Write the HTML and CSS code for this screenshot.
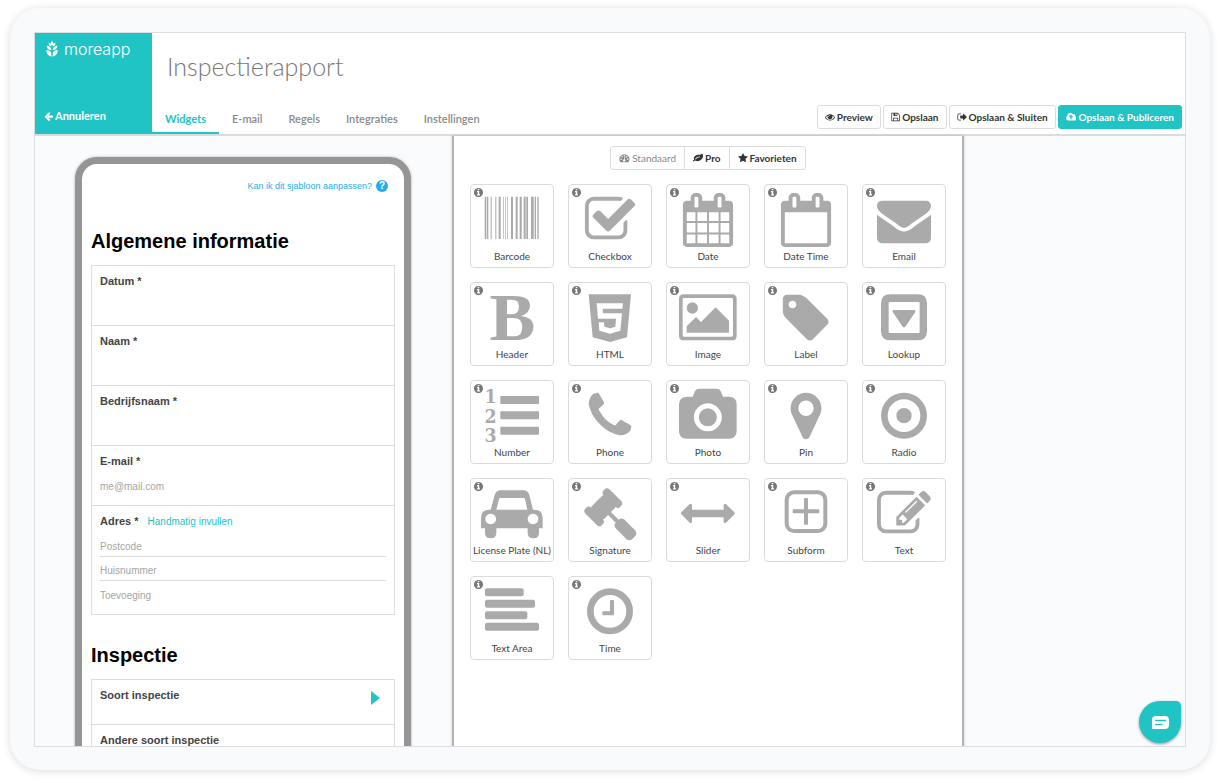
FILE: index.html
```html
<!DOCTYPE html>
<html lang="nl">
<head>
<meta charset="utf-8">
<meta name="viewport" content="width=device-width, initial-scale=1">
<title>Inspectierapport - MoreApp</title>
<link rel="stylesheet" href="styles.css">
</head>
<body>
<svg class="sprite" aria-hidden="true">
  <symbol id="info" viewBox="128 128 1536 1536"><path d="M1152 1376v-160q0-14-9-23t-23-9h-96v-512q0-14-9-23t-23-9h-320q-14 0-23 9t-9 23v160q0 14 9 23t23 9h96v320h-96q-14 0-23 9t-9 23v160q0 14 9 23t23 9h448q14 0 23-9t9-23zm-128-896v-160q0-14-9-23t-23-9h-192q-14 0-23 9t-9 23v160q0 14 9 23t23 9h192q14 0 23-9t9-23zm640 416q0 209-103 385.5t-279.5 279.5-385.5 103-385.5-103-279.5-279.5-103-385.5 103-385.5 279.5-279.5 385.5-103 385.5 103 279.5 279.5 103 385.5z"/></symbol>
</svg>
<div class="card">
<div class="app">
  <header class="header">
    <div class="brand">
      <a class="logo" href="#">
        <svg class="logo-mark" viewBox="0 0 36 48" aria-hidden="true">
          <path d="M18 0c5 4 5 9 0 13-5-4-5-9 0-13zM8 5c6 1 9 5 8 11-6-1-9-5-8-11zM28 5c-6 1-9 5-8 11 6-1 9-5 8-11zM2 14c8 0 14 5 14 13C8 27 2 22 2 14zM34 14c-8 0-14 5-14 13 8 0 14-5 14-13zM1 27c9 0 15 5 15 12v8C7 45 1 38 1 27zM35 27c-9 0-15 5-15 12v8c9-2 15-9 15-20z"/>
        </svg>
        <span>moreapp</span>
      </a>
      <a class="cancel" href="#">
        <svg viewBox="64 128 1600 1600" aria-hidden="true"><path d="M1664 896v128q0 53-32.5 90.5t-84.5 37.5h-704l293 294q38 36 38 90t-38 90l-75 76q-37 37-90 37-52 0-91-37l-651-652q-37-37-37-90 0-52 37-91l651-650q38-38 91-38 52 0 90 38l75 74q38 38 38 91t-38 91l-293 293h704q52 0 84.5 37.5t32.5 90.5z"/></svg>
        Annuleren
      </a>
    </div>
    <div class="head-main">
      <h1>Inspectierapport</h1>
      <div class="head-row">
        <nav class="tabs">
          <a class="tab active" href="#">Widgets</a>
          <a class="tab" href="#">E-mail</a>
          <a class="tab" href="#">Regels</a>
          <a class="tab" href="#">Integraties</a>
          <a class="tab" href="#">Instellingen</a>
        </nav>
        <div class="actions">
          <button class="btn" type="button"><svg viewBox="0 0 1792 1792" aria-hidden="true"><path d="M1664 960q-152-236-381-353 61 104 61 225 0 185-131.5 316.5t-316.5 131.5-316.5-131.5-131.5-316.5q0-121 61-225-229 117-381 353 133 205 333.5 326.5t434.5 121.5 434.5-121.5 333.5-326.5zm-720-384q0-20-14-34t-34-14q-125 0-214.5 89.5t-89.5 214.5q0 20 14 34t34 14 34-14 14-34q0-86 61-147t147-61q20 0 34-14t14-34zm848 384q0 34-20 69-140 230-376.5 368.5t-499.5 138.5-499.5-139-376.5-368q-20-35-20-69t20-69q140-229 376.5-368t499.5-139 499.5 139 376.5 368q20 35 20 69z"/></svg>Preview</button>
          <button class="btn" type="button"><svg viewBox="0 0 26 28" aria-hidden="true"><path fill-rule="evenodd" d="M2.500 2h16L25 8.500V24.500q0 1.500-1.500 1.500h-21Q1 26 1 24.500v-21Q1 2 2.500 2zM3 4v20h3v-7q0-1 1-1h12q1 0 1 1v7h3V9l-5-5v6q0 1-1 1H8q-1 0-1-1V4zm5 14v6h10v-6zm4-14v5h4V4z"/></svg>Opslaan</button>
          <button class="btn" type="button"><svg viewBox="0 0 28 28" aria-hidden="true"><path d="M11 4v2.200H6Q3.200 6.200 3.200 9v10Q3.200 21.800 6 21.800h5V24H6Q1 24 1 19V9Q1 4 6 4zM17 5.500q0-2 1.500-.7l8.500 8.400q.8.800 0 1.600l-8.500 8.400q-1.500 1.300-1.500-.7V18H10q-1 0-1-1v-6q0-1 1-1h7z"/></svg>Opslaan &amp; Sluiten</button>
          <button class="btn primary" type="button"><svg viewBox="0 0 1920 1792" aria-hidden="true"><path d="M1280 864q0-14-9-23l-352-352q-9-9-23-9t-23 9l-351 351q-10 12-10 24 0 14 9 23t23 9h224v352q0 13 9.500 22.500t22.500 9.500h192q13 0 22.500-9.500t9.500-22.500v-352h224q13 0 22.500-9.500t9.500-22.500zm640 288q0 159-112.500 271.500t-271.500 112.500h-1088q-185 0-316.500-131.500t-131.500-316.500q0-130 70-240t188-165q-2-30-2-43 0-212 150-362t362-150q156 0 285.500 87t188.500 231q71-62 166-62 106 0 181 75t75 181q0 76-41 138 130 31 213.500 135.500t83.500 238.500z"/></svg>Opslaan &amp; Publiceren</button>
        </div>
      </div>
    </div>
  </header>

  <main class="workspace">
    <section class="preview">
      <div class="phone">
        <a class="help" href="#">Kan ik dit sjabloon aanpassen? <span class="help-mark">?</span></a>
        <h2>Algemene informatie</h2>
        <div class="fields">
          <div class="field"><label for="datum">Datum *</label><input id="datum" type="text"></div>
          <div class="field"><label for="naam">Naam *</label><input id="naam" type="text"></div>
          <div class="field"><label for="bedrijf">Bedrijfsnaam *</label><input id="bedrijf" type="text"></div>
          <div class="field"><label for="email">E-mail *</label><input id="email" type="email" placeholder="me@mail.com"></div>
          <div class="field address">
            <div class="field-head"><label for="postcode">Adres *</label><a href="#">Handmatig invullen</a></div>
            <input id="postcode" type="text" placeholder="Postcode">
            <input type="text" aria-label="Huisnummer" placeholder="Huisnummer">
            <input type="text" aria-label="Toevoeging" placeholder="Toevoeging">
          </div>
        </div>
        <h2>Inspectie</h2>
        <div class="fields">
          <button class="field pick" type="button"><span>Soort inspectie</span><svg viewBox="0 0 9 14" aria-hidden="true"><path d="M0 0l9 7-9 7z"/></svg></button>
          <button class="field pick" type="button"><span>Andere soort inspectie</span></button>
        </div>
      </div>
    </section>

    <section class="panel">
      <div class="filters">
        <button class="btn" type="button" disabled><svg viewBox="0 0 28 26" aria-hidden="true"><path fill-rule="evenodd" d="M14 3a13 13 0 0 1 11 20q-.5 1-1.500 1h-19Q3.500 24 3 23A13 13 0 0 1 14 3zM5.500 14a1.800 1.800 0 1 0 .01 0zM8 8a1.800 1.800 0 1 0 .01 0zM14 5.200a1.800 1.800 0 1 0 .01 0zM20 8a1.800 1.800 0 1 0 .01 0zM22.500 14a1.800 1.800 0 1 0 .01 0zM15 10l-1.500 6.500a3 3 0 1 0 1.800.5l1.600-6.400z"/></svg>Standaard</button>
        <button class="btn" type="button"><svg viewBox="0 0 1792 1792" aria-hidden="true"><path d="M1280 704q0-26-19-45t-45-19q-172 0-318 49.500t-259.500 134-235.500 219.500q-19 21-19 45 0 26 19 45t45 19q24 0 45-19 27-24 74-71t67-66q137-124 268.500-176t313.500-52q26 0 45-19t19-45zm512-198q0 95-20 193-46 224-184.500 383t-357.500 268q-214 108-438 108-148 0-286-47-15-5-88-42t-96-37q-16 0-39.500 32t-45 70-52.500 70-60 32q-43 0-63.500-17.500t-45.500-59.500q-2-4-6-11t-5.500-10-3-9.500-1.500-13.500q0-35 31-73.500t68-65.500 68-56 31-48q0-4-14-38t-16-44q-9-51-9-104 0-115 43.500-220t119-184.500 170.500-139 204-95.500q55-18 145-25.500t179.500-9 178.500-6 163.500-24 113.500-56.500l29.500-29.500 29.500-28 27-20 36.500-16 43.500-4.500q39 0 70.500 46t47.500 112 24 124 8 96z"/></svg>Pro</button>
        <button class="btn" type="button"><svg viewBox="0 0 1792 1792" aria-hidden="true"><path d="M1728 647q0 22-26 48l-363 354 86 500q1 7 1 20 0 21-10.500 35.500t-30.500 14.500q-19 0-40-12l-449-236-449 236q-22 12-40 12-21 0-31.500-14.500t-10.500-35.500q0-6 2-20l86-500-364-354q-25-27-25-48 0-37 56-46l502-73 225-455q19-41 49-41t49 41l225 455 502 73q56 9 56 46z"/></svg>Favorieten</button>
      </div>
      <div class="widgets">
        <button class="widget" type="button"><svg class="info"><use href="#info"/></svg>
          <svg class="pic" viewBox="0 0 192 162"><path d="M14 11h5v127h-5zM21 11h4v127h-4zM32 11h3v127h-3zM46 11h3v127h-3zM56 11h6v127h-6zM70 11h2v127h-2zM76 11h2v127h-2zM82 11h2v127h-2zM93 11h6v127h-6zM107 11h6v127h-6zM119 11h6v127h-6zM131 11h6v127h-6zM139 11h5v127h-5zM153 11h8v127h-8zM164 11h4v127h-4zM172 11h4v127h-4z"/></svg>
          <span>Barcode</span></button>
        <button class="widget" type="button"><svg class="info"><use href="#info"/></svg>
          <svg class="pic" viewBox="0 0 1792 1792"><path d="M1472 930v318q0 119-84.500 203.500t-203.500 84.500h-832q-119 0-203.500-84.500t-84.500-203.500v-832q0-119 84.500-203.500t203.500-84.500h832q63 0 117 25 15 7 18 23 3 17-9 29l-49 49q-10 10-23 10-3 0-9-2-23-6-45-6h-832q-66 0-113 47t-47 113v832q0 66 47 113t113 47h832q66 0 113-47t47-113v-254q0-13 9-22l64-64q10-10 23-10 6 0 12 3 20 8 20 29zm231-489l-814 814q-24 24-57 24t-57-24l-430-430q-24-24-24-57t24-57l110-110q24-24 57-24t57 24l263 263 647-647q24-24 57-24t57 24l110 110q24 24 24 57t-24 57z"/></svg>
          <span>Checkbox</span></button>
        <button class="widget" type="button"><svg class="info"><use href="#info"/></svg>
          <svg class="pic" viewBox="0 0 1792 1792"><path d="M192 1664h288v-288h-288v288zm352 0h320v-288h-320v288zm-352-352h288v-320h-288v320zm352 0h320v-320h-320v320zm-352-384h288v-288h-288v288zm736 736h320v-288h-320v288zm-384-736h320v-288h-320v288zm768 736h288v-288h-288v288zm-384-352h320v-320h-320v320zm-352-864v-288q0-13-9.500-22.500t-22.500-9.500h-64q-13 0-22.500 9.500t-9.500 22.500v288q0 13 9.500 22.500t22.500 9.500h64q13 0 22.500-9.500t9.500-22.500zm736 864h288v-320h-288v320zm-384-384h320v-288h-320v288zm384 0h288v-288h-288v288zm32-480v-288q0-13-9.500-22.500t-22.500-9.500h-64q-13 0-22.500 9.500t-9.500 22.500v288q0 13 9.500 22.500t22.500 9.500h64q13 0 22.500-9.500t9.500-22.500zm384-64v1280q0 52-38 90t-90 38h-1408q-52 0-90-38t-38-90v-1280q0-52 38-90t90-38h128v-96q0-66 47-113t113-47h64q66 0 113 47t47 113v96h384v-96q0-66 47-113t113-47h64q66 0 113 47t47 113v96h128q52 0 90 38t38 90z"/></svg>
          <span>Date</span></button>
        <button class="widget" type="button"><svg class="info"><use href="#info"/></svg>
          <svg class="pic" viewBox="0 0 1792 1792"><path d="M192 1664h1408v-1024h-1408v1024zm384-1216v-288q0-13-9.500-22.500t-22.500-9.500h-64q-13 0-22.500 9.500t-9.500 22.500v288q0 13 9.500 22.500t22.500 9.500h64q13 0 22.500-9.500t9.500-22.500zm768 0v-288q0-13-9.500-22.500t-22.500-9.500h-64q-13 0-22.500 9.500t-9.500 22.500v288q0 13 9.500 22.500t22.500 9.500h64q13 0 22.500-9.500t9.500-22.500zm384-64v1280q0 52-38 90t-90 38h-1408q-52 0-90-38t-38-90v-1280q0-52 38-90t90-38h128v-96q0-66 47-113t113-47h64q66 0 113 47t47 113v96h384v-96q0-66 47-113t113-47h64q66 0 113 47t47 113v96h128q52 0 90 38t38 90z"/></svg>
          <span>Date Time</span></button>
        <button class="widget" type="button"><svg class="info"><use href="#info"/></svg>
          <svg class="pic" viewBox="0 0 1792 1792"><path d="M1792 710v794q0 66-47 113t-113 47h-1472q-66 0-113-47t-47-113v-794q44 49 101 87 362 246 497 345 57 42 92.500 65.500t94.500 48 110 24.500h2q51 0 110-24.500t94.500-48 92.500-65.500q170-123 498-345 57-39 100-87zm0-294q0 79-49 151t-122 123q-376 261-468 325-10 7-42.500 31t-54 38.500-52 32.500-57.500 27-50 9h-2q-23 0-50-9t-57.500-27-52-32.500-54-38.500-42.500-31q-91-64-262-182.500t-205-142.500q-62-42-117-115.500t-55-136.500q0-78 41.500-130t118.500-52h1472q65 0 112.500 47t47.500 113z"/></svg>
          <span>Email</span></button>

        <button class="widget" type="button"><svg class="info"><use href="#info"/></svg>
          <svg class="pic" viewBox="0 0 192 162"><text class="bold-b" x="97" y="148" text-anchor="middle">B</text></svg>
          <span>Header</span></button>
        <button class="widget" type="button"><svg class="info"><use href="#info"/></svg>
          <svg class="pic" viewBox="0 0 192 162"><path fill-rule="evenodd" d="M32 10H159L147 139 96 153 44 139zM56 37l4 46h54l-2 24-16 5-17-5-1-13H62l2 25 32 9 31-9 5-52H75l-1-14h59l2-16z"/></svg>
          <span>HTML</span></button>
        <button class="widget" type="button"><svg class="info"><use href="#info"/></svg>
          <svg class="pic" viewBox="0 0 192 162"><path fill-rule="evenodd" d="M23 10H168q14 0 14 14V134q0 14-14 14H23Q9 148 9 134V24q0-14 14-14zM24 21q-4 0-4 4V133q0 4 4 4H167q4 0 4-4V25q0-4-4-4zM32 125V106L60 78l15 15 44-44 40 40v36z"/><circle cx="49" cy="51" r="17"/></svg>
          <span>Image</span></button>
        <button class="widget" type="button"><svg class="info"><use href="#info"/></svg>
          <svg class="pic" viewBox="0 0 1792 1792"><path d="M576 448q0-53-37.500-90.500t-90.500-37.500-90.500 37.500-37.500 90.500 37.500 90.500 90.500 37.500 90.500-37.500 37.500-90.500zm1067 576q0 53-37 90l-491 492q-39 37-91 37-53 0-90-37l-715-716q-38-37-64.500-101t-26.500-117v-416q0-52 38-90t90-38h416q53 0 117 26.500t102 64.500l715 714q37 39 37 91z"/></svg>
          <span>Label</span></button>
        <button class="widget" type="button"><svg class="info"><use href="#info"/></svg>
          <svg class="pic" viewBox="0 0 192 162"><path fill-rule="evenodd" d="M54 10h84q27 0 27 27v84q0 27-27 27H54q-27 0-27-27V37q0-27 27-27zM53 33q-3 0-3 3v87q0 3 3 3h87q3 0 3-3V36q0-3-3-3zM66 57h60q6 0 4 6l-30 44q-4 4-8 0L62 63q-2-6 4-6z"/></svg>
          <span>Lookup</span></button>

        <button class="widget" type="button"><svg class="info"><use href="#info"/></svg>
          <svg class="pic" viewBox="0 0 192 162"><g class="digits"><text x="32" y="43" text-anchor="middle">1</text><text x="32" y="101" text-anchor="middle">2</text><text x="32" y="158" text-anchor="middle">3</text></g><rect x="61" y="21" width="116" height="24" rx="3"/><rect x="61" y="67" width="116" height="24" rx="3"/><rect x="61" y="113" width="116" height="24" rx="3"/></svg>
          <span>Number</span></button>
        <button class="widget" type="button"><svg class="info"><use href="#info"/></svg>
          <svg class="pic" viewBox="0 0 1792 1792"><path d="M1600 1240q0 27-10 70.500t-21 68.500q-21 50-122 106-94 51-186 51-27 0-53-3.500t-57.500-12.500-47-14.500-55.500-20.500-49-18q-98-35-175-83-127-79-264-216t-216-264q-48-77-83-175-3-9-18-49t-20.500-55.500-14.500-47-12.500-57.500-3.500-53q0-92 51-186 56-101 106-122 25-11 68.500-21t70.500-10q14 0 21 3 18 6 53 76 11 19 30 54t35 63.500 31 53.500q3 4 17.500 25t21.500 35.500 7 28.500q0 20-28.500 50t-62 55-62 53-28.500 46q0 9 5 22.500t8.500 20.500 14 24 11.500 19q76 137 174 235t235 174q2 1 19 11.500t24 14 20.500 8.500 22.500 5q18 0 46-28.500t53-62 55-62 50-28.500q14 0 28.500 7t35.500 21.500 25 17.500q25 15 53.500 31t63.500 35 54 30q70 35 76 53 3 7 3 21z"/></svg>
          <span>Phone</span></button>
        <button class="widget" type="button"><svg class="info"><use href="#info"/></svg>
          <svg class="pic" viewBox="0 0 192 162"><path fill-rule="evenodd" d="M34 23H50l6-15q4-9 13-9h53q9 0 13 9l6 15h17q24 0 24 23v80q0 23-24 23H33Q9 149 9 126V46Q9 23 34 23zM95.500 43a42 42 0 1 0 .01 0z"/><circle cx="95.500" cy="85" r="27"/></svg>
          <span>Photo</span></button>
        <button class="widget" type="button"><svg class="info"><use href="#info"/></svg>
          <svg class="pic" viewBox="0 0 1792 1792"><path d="M1152 640q0-106-75-181t-181-75-181 75-75 181 75 181 181 75 181-75 75-181zm256 0q0 109-33 179l-364 774q-16 33-47.500 52t-67.500 19-67.500-19-46.500-52l-365-774q-33-70-33-179 0-212 150-362t362-150 362 150 150 362z"/></svg>
          <span>Pin</span></button>
        <button class="widget" type="button"><svg class="info"><use href="#info"/></svg>
          <svg class="pic" viewBox="0 0 192 162"><circle class="line" cx="96" cy="80" r="59" stroke-width="20"/><circle cx="96" cy="80" r="23"/></svg>
          <span>Radio</span></button>

        <button class="widget" type="button"><svg class="info"><use href="#info"/></svg>
          <svg class="pic" viewBox="0 0 192 162"><path fill-rule="evenodd" d="M62 10h68q14 0 18 14l11 44h4q25 0 25 25v31h-11v14q0 16-17 16t-17-16v-14H49v14q0 16-17 16t-17-16v-14H3V93q0-25 25-25h4l12-44q4-14 18-14zM60 33q-2 0-3 3l-8 32h93l-7-32q-1-3-3-3zM32 80a16 16 0 1 0 .01 0zM159 80a16 16 0 1 0 .01 0z"/></svg>
          <span>License Plate (NL)</span></button>
        <button class="widget" type="button"><svg class="info"><use href="#info"/></svg>
          <svg class="pic" viewBox="0 0 1792 1792"><path d="M1771 1536q0 53-37 90l-107 108q-39 37-91 37-53 0-90-37l-363-364q-38-36-38-90 0-53 43-96l-256-256-126 126q-14 14-34 14t-34-14q2 2 12.500 12t12.500 13 10 11.500 10 13.500 6 13.500 5.500 16.500 1.500 18q0 38-28 68-3 3-16.500 18t-19 20.500-18.500 16.500-22 15.500-22 9-26 4.500q-40 0-68-28l-408-408q-28-28-28-68 0-13 4.500-26t9-22 15.500-22 16.500-18.500 20.500-19 18-16.500q30-28 68-28 10 0 18 1.500t16.500 5.500 13.500 6 13.500 10 11.500 10 13 12.500 12 12.500q-14-14-14-34t14-34l348-348q14-14 34-14t34 14q-2-2-12.500-12t-12.500-13-10-11.500-10-13.500-6-13.500-5.500-16.500-1.500-18q0-38 28-68 3-3 16.500-18t19-20.500 18.500-16.500 22-15.500 22-9 26-4.500q40 0 68 28l408 408q28 28 28 68 0 13-4.500 26t-9 22-15.500 22-16.500 18.500-20.500 19-18 16.500q-30 28-68 28-10 0-18-1.500t-16.500-5.500-13.500-6-13.500-10-11.500-10-13-12.500-12-12.500q14 14 14 34t-14 34l-126 126 256 256q43-43 96-43 52 0 91 37l363 363q37 39 37 91z"/></svg>
          <span>Signature</span></button>
        <button class="widget" type="button"><svg class="info"><use href="#info"/></svg>
          <svg class="pic" viewBox="0 0 192 162"><path d="M16 76l25-25q7-3 7 4v13h95V55q0-7 7-4l25 25q3 3 0 6l-25 25q-7 3-7-4V91H48v12q0 7-7 4L16 82q-3-3 0-6z"/></svg>
          <span>Slider</span></button>
        <button class="widget" type="button"><svg class="info"><use href="#info"/></svg>
          <svg class="pic" viewBox="0 0 192 162"><rect class="line" x="38" y="16" width="116" height="116" rx="22" stroke-width="12"/><path d="M90 36q0-3 3-3h6q3 0 3 3v31h31q3 0 3 3v6q0 3-3 3h-31v31q0 3-3 3h-6q-3 0-3-3V79H59q-3 0-3-3v-6q0-3 3-3h31z"/></svg>
          <span>Subform</span></button>
        <button class="widget" type="button"><svg class="info"><use href="#info"/></svg>
          <svg class="pic" viewBox="0 0 1792 1792"><path d="M888 1184l116-116-152-152-116 116v56h96v96h56zm440-720q-16-16-33 1l-350 350q-17 17-1 33t33-1l350-350q17-17 1-33zm80 594v190q0 119-84.500 203.500t-203.500 84.500h-832q-119 0-203.500-84.500t-84.500-203.500v-832q0-119 84.500-203.500t203.500-84.500h832q63 0 117 25 15 7 18 23 3 17-9 29l-49 49q-14 14-32 8-23-6-45-6h-832q-66 0-113 47t-47 113v832q0 66 47 113t113 47h832q66 0 113-47t47-113v-126q0-13 9-22l64-64q15-15 35-7t20 29zm-96-738l288 288-672 672h-288v-288zm444 132l-92 92-288-288 92-92q28-28 68-28t68 28l152 152q28 28 28 68t-28 68z"/></svg>
          <span>Text</span></button>

        <button class="widget" type="button"><svg class="info"><use href="#info"/></svg>
          <svg class="pic" viewBox="0 0 192 162"><rect x="15" y="10" width="116" height="24" rx="6"/><rect x="15" y="44" width="150" height="24" rx="6"/><rect x="15" y="79" width="127" height="24" rx="6"/><rect x="15" y="113" width="162" height="24" rx="6"/></svg>
          <span>Text Area</span></button>
        <button class="widget" type="button"><svg class="info"><use href="#info"/></svg>
          <svg class="pic" viewBox="0 0 192 162"><circle class="line" cx="96" cy="79" r="59" stroke-width="20"/><path d="M96 48q0-3 3-3h6q3 0 3 3v39q0 4-4 4H76q-3 0-3-3v-6q0-3 3-3h20z"/></svg>
          <span>Time</span></button>
      </div>
    </section>
  </main>
  <button class="chat" type="button" aria-label="Chat">
    <svg viewBox="0 0 50 38" aria-hidden="true"><path fill-rule="evenodd" d="M12 0h26q12 0 12 12v14q0 12-12 12H3q-3 0-3-3V12Q0 0 12 0zM11 11q-2 0-2 2t2 2h29q2 0 2-2t-2-2zM11 23q-2 0-2 2t2 2h18q2 0 2-2t-2-2z"/></svg>
  </button>
</div>
</div>
</body>
</html>
```

FILE: styles.css
```css
* { box-sizing: border-box; }

body {
  margin: 0;
  height: 100vh;
  min-height: 500px;
  padding: 8px 10px 13px;
  background: #fff;
  color: #444;
  font-family: Lato, "Open Sans", sans-serif;
  font-size: 10px;
}

button, input { font: inherit; color: inherit; }
a { text-decoration: none; }
svg { fill: currentColor; }
.sprite { display: none; }

.card {
  height: 100%;
  padding: 24px 24px 23px;
  border-radius: 30px;
  background: #f9fafc;
  box-shadow: 0 1px 8px rgba(0, 0, 0, 0.14);
}

.app {
  position: relative;
  height: 100%;
  display: flex;
  flex-direction: column;
  border: 1px solid #dcdee1;
  overflow: hidden;
}

/* Header */
.header {
  display: flex;
  height: 103px;
  flex: none;
  background: #fff;
  border-bottom: 2px solid #dcdcdc;
}

.brand {
  width: 117px;
  flex: none;
  display: flex;
  flex-direction: column;
  justify-content: space-between;
  padding: 6px 9px 11px;
  background: #21c4c4;
  color: #fff;
}

.brand a { color: #fff; }

.logo {
  display: flex;
  align-items: center;
  gap: 6px;
  padding-left: 2px;
  font-family: Inter, Lato, sans-serif;
  font-size: 16px;
  line-height: 20px;
  font-weight: 300;
}

.logo-mark { width: 12px; height: 16px; }

.cancel {
  display: flex;
  align-items: center;
  gap: 2px;
  font-size: 11px;
  line-height: 14px;
  font-weight: 700;
}

.cancel svg { width: 9px; height: 9px; }

.head-main {
  flex: 1;
  display: flex;
  flex-direction: column;
  justify-content: space-between;
}

h1 {
  margin: 0;
  padding: 17px 15px 0;
  font-size: 25px;
  line-height: 32px;
  font-weight: 300;
  color: #777;
}

.head-row {
  display: flex;
  justify-content: space-between;
  align-items: flex-end;
}

.tabs { display: flex; }

.tab {
  padding: 0 13px 6px;
  border-bottom: 2px solid transparent;
  color: #8a8a8a;
  font-size: 11px;
  line-height: 14px;
  font-weight: 600;
}

.tab.active {
  border-bottom-color: #21c4c4;
  color: #21c4c4;
  font-weight: 700;
}

.actions {
  display: flex;
  gap: 2px;
  padding: 0 3px 5px;
}

.btn {
  height: 24px;
  display: flex;
  align-items: center;
  gap: 2px;
  padding: 0 7px;
  border: 1px solid #dcdcdc;
  border-radius: 3px;
  background: #fff;
  color: #333;
  font-weight: 700;
  white-space: nowrap;
}

.btn svg { height: 10px; }
.btn.primary { background: #21c4c4; border-color: #21c4c4; color: #fff; }

/* Workspace */
.workspace {
  flex: 1;
  min-height: 0;
  display: grid;
  grid-template-columns: 417px 512px 1fr;
  background: #fafbfd;
}

.preview {
  min-height: 0;
  overflow: hidden;
  padding: 21px 41px 0 40px;
}

.phone {
  min-height: 800px;
  padding: 15px 9px;
  border: 7px solid #959595;
  border-radius: 22px;
  background: #fff;
  box-shadow: 0 0 3px rgba(0, 0, 0, 0.3);
  font-family: "Liberation Sans", Arial, sans-serif;
}

.help {
  display: flex;
  justify-content: flex-end;
  align-items: center;
  gap: 4px;
  padding-right: 7px;
  color: #25aee8;
  font-size: 9px;
  line-height: 14px;
}

.help-mark {
  width: 12px;
  height: 12px;
  border-radius: 50%;
  background: #25aee8;
  color: #fff;
  font-size: 10px;
  font-weight: 700;
  line-height: 12px;
  text-align: center;
}

h2 {
  margin: 0;
  padding: 36px 0 12px;
  color: #000;
  font-size: 20px;
  line-height: 24px;
  font-weight: 700;
}

.fields {
  border: 1px solid #dcdcdc;
  border-bottom-width: 0;
}

.fields + h2 { padding-top: 28px; }

.field {
  display: flex;
  flex-direction: column;
  min-height: 60px;
  padding: 8px;
  border-bottom: 1px solid #dcdcdc;
}

.field label, .pick span {
  font-size: 11px;
  line-height: 15px;
  font-weight: 700;
  color: #444;
}

.field input {
  width: 100%;
  height: 18px;
  margin-top: 8px;
  padding: 0;
  border: 0;
  outline: 0;
  background: transparent;
  font-size: 10px;
}

.field input::placeholder { color: #a5a5a5; opacity: 1; }

.field-head { display: flex; align-items: center; gap: 9px; }
.field-head a { color: #21c4c4; font-size: 10px; }

.address { padding-bottom: 9px; }
.address input { height: 20px; margin-top: 4px; border-bottom: 1px solid #dcdcdc; }
.address .field-head + input { margin-top: 8px; }
.address input:last-child { border-bottom: 0; }

.pick {
  width: 100%;
  min-height: 45px;
  flex-direction: row;
  justify-content: space-between;
  align-items: flex-start;
  border-width: 0 0 1px;
  border-style: solid;
  border-color: #dcdcdc;
  background: #fff;
  text-align: left;
}

.pick svg { width: 9px; height: 14px; margin: 3px 6px 0; color: #21c4c4; }

/* Widget palette */
.panel {
  padding: 10px 0;
  background: #fff;
  border: solid #b4b4b4;
  border-width: 0 2px;
  box-shadow: 0 0 3px rgba(0, 0, 0, 0.2);
}

.filters { display: flex; justify-content: center; }
.filters .btn { padding: 0 8px; border-radius: 0; }
.filters .btn + .btn { border-left: 0; }
.filters .btn:first-child { border-radius: 3px 0 0 3px; }
.filters .btn:last-child { border-radius: 0 3px 3px 0; }
.filters .btn:disabled { color: #888; font-weight: 400; }

.widgets {
  display: grid;
  grid-template-columns: repeat(5, 84px);
  justify-content: center;
  gap: 14px;
  padding-top: 14px;
}

.widget {
  position: relative;
  height: 84px;
  display: flex;
  flex-direction: column;
  align-items: center;
  padding: 8px 0 0;
  border: 1px solid #dadada;
  border-radius: 4px;
  background: #fff;
  white-space: nowrap;
  line-height: 14px;
}

.widget span { margin-top: 2px; }
.widget .pic { height: 54px; color: #aaa; overflow: visible; flex: none; }
.widget .info { position: absolute; top: 3px; left: 3px; width: 9px; height: 9px; color: #777; }

.line { fill: none; stroke: currentColor; }
.bold-b { font: 700 206px "Liberation Serif", "Times New Roman", serif; }
.digits { font: 700 58px "DejaVu Serif Condensed", "DejaVu Serif", serif; }

.chat {
  position: absolute;
  right: 4px;
  bottom: 3px;
  width: 42px;
  height: 42px;
  display: flex;
  align-items: center;
  justify-content: center;
  padding: 0;
  border: 0;
  border-radius: 50% 5px 50% 50%;
  background: #21c4c4;
  box-shadow: 0 1px 3px rgba(0, 0, 0, 0.4);
  color: #fff;
}

.chat svg { width: 17px; height: 13px; }
```
